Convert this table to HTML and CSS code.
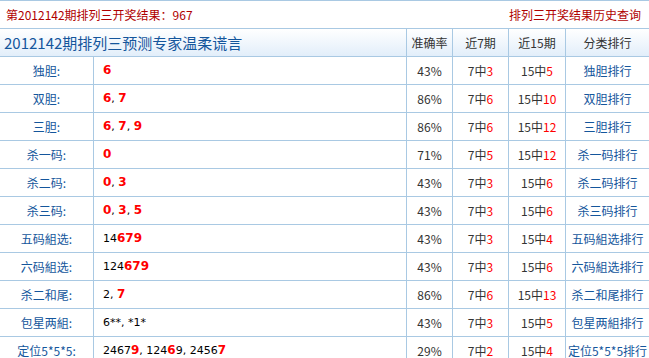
FILE: index.html
```html
<!DOCTYPE html>
<html lang="zh-CN">
<head>
<meta charset="utf-8">
<title>排列三预测</title>
<link rel="stylesheet" href="styles.css">
</head>
<body>
<table class="tbl">
  <colgroup>
    <col class="c-label"><col class="c-value"><col class="c-rate"><col class="c-n7"><col class="c-n15"><col class="c-rank">
  </colgroup>
  <tr class="top">
    <td colspan="6"><div class="topbar"><span>第2012142期排列三开奖结果：967</span><a class="hist">排列三开奖结果历史查询</a></div></td>
  </tr>
  <tr class="head">
    <td colspan="2" class="title">2012142期排列三预测专家温柔谎言</td>
    <td>准确率</td><td>近7期</td><td>近15期</td><td class="last">分类排行</td>
  </tr>
  <tr><td class="lbl">独胆:</td><td class="val"><b>6</b></td><td>43%</td><td>7中<i>3</i></td><td>15中<i>5</i></td><td class="last rk">独胆排行</td></tr>
  <tr><td class="lbl">双胆:</td><td class="val"><b>6</b>, <b>7</b></td><td>86%</td><td>7中<i>6</i></td><td>15中<i>10</i></td><td class="last rk">双胆排行</td></tr>
  <tr><td class="lbl">三胆:</td><td class="val"><b>6</b>, <b>7</b>, <b>9</b></td><td>86%</td><td>7中<i>6</i></td><td>15中<i>12</i></td><td class="last rk">三胆排行</td></tr>
  <tr><td class="lbl">杀一码:</td><td class="val"><b>0</b></td><td>71%</td><td>7中<i>5</i></td><td>15中<i>12</i></td><td class="last rk">杀一码排行</td></tr>
  <tr><td class="lbl">杀二码:</td><td class="val"><b>0</b>, <b>3</b></td><td>43%</td><td>7中<i>3</i></td><td>15中<i>6</i></td><td class="last rk">杀二码排行</td></tr>
  <tr><td class="lbl">杀三码:</td><td class="val"><b>0</b>, <b>3</b>, <b>5</b></td><td>43%</td><td>7中<i>3</i></td><td>15中<i>6</i></td><td class="last rk">杀三码排行</td></tr>
  <tr><td class="lbl">五码組选:</td><td class="val">14<b>679</b></td><td>43%</td><td>7中<i>3</i></td><td>15中<i>4</i></td><td class="last rk">五码組选排行</td></tr>
  <tr><td class="lbl">六码組选:</td><td class="val">124<b>679</b></td><td>43%</td><td>7中<i>3</i></td><td>15中<i>6</i></td><td class="last rk">六码組选排行</td></tr>
  <tr><td class="lbl">杀二和尾:</td><td class="val">2, <b>7</b></td><td>86%</td><td>7中<i>6</i></td><td>15中<i>13</i></td><td class="last rk">杀二和尾排行</td></tr>
  <tr><td class="lbl">包星两組:</td><td class="val">6**, *1*</td><td>43%</td><td>7中<i>3</i></td><td>15中<i>5</i></td><td class="last rk">包星两組排行</td></tr>
  <tr><td class="lbl">定位5*5*5:</td><td class="val">2467<b>9</b>, 124<b>6</b>9, 2456<b>7</b></td><td>29%</td><td>7中<i>2</i></td><td>15中<i>4</i></td><td class="last rk">定位5*5*5排行</td></tr>
</table>
</body>
</html>
```
FILE: styles.css
```css
html, body {
  margin: 0;
  padding: 0;
  background: #fff;
}
body {
  font-family: "Noto Sans CJK SC", "DejaVu Sans", sans-serif;
  font-size: 12px;
  color: #333;
}
.tbl {
  width: 649px;
  table-layout: fixed;
  border-collapse: separate;
  border-spacing: 0;
  border-top: 1px solid #a9c9e3;
}
.c-label { width: 94px; }
.c-value { width: 313px; }
.c-rate { width: 46px; }
.c-n7 { width: 56px; }
.c-n15 { width: 57px; }
.c-rank { width: 83px; }
.tbl td {
  height: 27px;
  padding: 0;
  border-bottom: 1px solid #a9c9e3;
  border-right: 1px solid #a9c9e3;
  text-align: center;
  white-space: nowrap;
  line-height: 16px;
  overflow: visible;
}
.tbl td.last { border-right: none; }
.top td { border-right: none; }
.topbar {
  display: flex;
  justify-content: space-between;
  align-items: center;
  padding: 0 8px 0 6px;
  color: #b00000;
  font-size: 12px;
}
.hist { color: #b00000; }
.head td {
  background: linear-gradient(#ffffff, #e2eefa);
  color: #333;
  font-size: 12px;
}
.head td.title {
  text-align: left;
  padding-left: 4px;
  font-size: 15px;
  color: #14569c;
}
.lbl { color: #14569c; }
.tbl td.val {
  text-align: left;
  padding-left: 9px;
  color: #000;
  font-family: "DejaVu Sans", sans-serif;
  font-size: 11px;
}
.val b {
  color: #f00;
  font-weight: bold;
  font-size: 12px;
}
.tbl i {
  font-style: normal;
  color: #f00;
}
.tbl td.rk {
  color: #14569c;
  font-size: 12px;
  letter-spacing: 0;
}
```
